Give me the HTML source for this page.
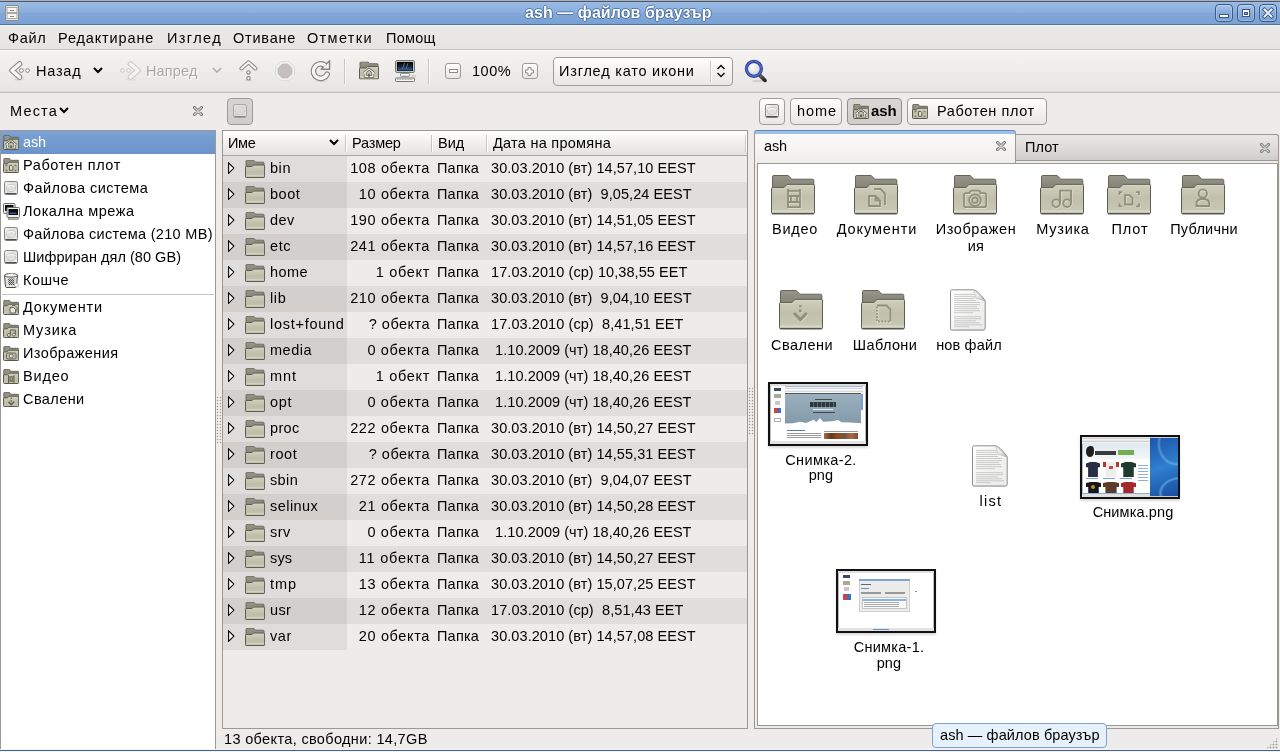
<!DOCTYPE html>
<html><head><meta charset="utf-8">
<style>
*{box-sizing:border-box;margin:0;padding:0}
html,body{width:1280px;height:752px;overflow:hidden;background:#edeceb;font-family:"Liberation Sans",sans-serif;color:#000;position:relative}
.a{position:absolute}
.t{position:absolute;font-size:14.5px;line-height:16px;white-space:pre;will-change:transform}
svg.i{position:absolute;overflow:visible}
#title{left:0;top:0;width:1280px;height:25px;background:linear-gradient(#b8aea6 0,#b8aea6 1px,#3f5a80 1px,#3f5a80 2px,#a2c0ea 2px,#98b9e3 3px,#8bb0df 12px,#82a8d9 13px,#7aa1d4 24px,#4a74aa 24px)}
#menubar{left:0;top:25px;width:1280px;height:25px;background:linear-gradient(#f6f2ee 0,#f6f2ee 1px,#ebeae8 1px,#e5e4e2 24px,#c3c1bd 24px)}
#toolbar{left:0;top:50px;width:1280px;height:43px;background:linear-gradient(#ffffff 0,#ffffff 1px,#f4f3f1 1px,#e7e6e4 40px,#ebebe9 41px,#c4c2be 42px)}
.wb{position:absolute;top:4px;width:18px;height:18px;border:1px solid #3d5b84;border-radius:4px;background:linear-gradient(#a9c5eb,#86abdb 50%,#7ba2d5);box-shadow:inset 0 0 0 1px rgba(255,255,255,0.25)}
.sep{position:absolute;width:1px;background:#c8c6c2;box-shadow:1px 0 0 #fafaf9}
.btn{position:absolute;border:1px solid #a19c97;border-radius:4px;background:linear-gradient(#fdfdfc,#f3f2f1 50%,#e8e7e5)}
.sb{position:absolute;top:135px;left:3px}
.row{position:absolute;left:223px;width:524px;height:26px}
.nm{position:absolute;left:0;top:0;width:124px;height:26px}
.lt{position:absolute;font-size:14.5px;line-height:16px;white-space:pre;top:5px}
.lbl{position:absolute;font-size:14.5px;line-height:16px;white-space:pre;text-align:center;will-change:transform}
</style></head><body>
<svg width="0" height="0" style="position:absolute">
<defs>
<linearGradient id="gF" x1="0" y1="0" x2="0" y2="1"><stop offset="0" stop-color="#d2d2c0"></stop><stop offset="0.55" stop-color="#bdbda9"></stop><stop offset="0.9" stop-color="#c3c3b0"></stop><stop offset="1" stop-color="#a9a994"></stop></linearGradient>
<linearGradient id="gFL" x1="0" y1="0" x2="0" y2="1"><stop offset="0" stop-color="#cfcfbd"></stop><stop offset="0.45" stop-color="#c0c0ac"></stop><stop offset="0.85" stop-color="#c6c6b3"></stop><stop offset="0.92" stop-color="#d9d9c8"></stop><stop offset="1" stop-color="#a9aa94"></stop></linearGradient>
<linearGradient id="gB" x1="0" y1="0" x2="0" y2="1"><stop offset="0" stop-color="#96978a"></stop><stop offset="1" stop-color="#818274"></stop></linearGradient>
<symbol id="fs" viewBox="0 0 16 16">
<path d="M0.8,13 V1.2 Q0.8,0.3 1.7,0.3 H6.3 L7.5,2.3 H14.8 Q15.7,2.3 15.7,3.2 V13 Z" fill="url(#gB)" stroke="#5f6052" stroke-width="0.9"></path>
<path d="M0.5,13.6 V6.6 Q0.5,5.8 1.3,5.8 H4.4 L6,4.2 H14.9 Q15.7,4.2 15.7,5 V13.6 Q15.7,14.5 14.8,14.5 H1.4 Q0.5,14.5 0.5,13.6 Z" fill="url(#gF)" stroke="#595a4c" stroke-width="1"></path>
</symbol>
<symbol id="fsHome" viewBox="0 0 16 16"><use href="#fs"></use>
<path d="M2.8,9.8 L8,5.6 L13.2,9.8 M4.3,8.8 V13 H11.7 V8.8" fill="none" stroke="#5a5b4d" stroke-width="2.3" stroke-linejoin="round"></path>
<path d="M2.8,9.8 L8,5.6 L13.2,9.8 M4.3,8.8 V13 H11.7 V8.8" fill="none" stroke="#f6f6f0" stroke-width="1" stroke-linejoin="round"></path>
<rect x="7.2" y="10.4" width="1.6" height="2.6" fill="#5a5b4d"></rect>
</symbol>
<symbol id="fsDesk" viewBox="0 0 16 16"><use href="#fs"></use>
<path d="M3,8.5 V7.3 H4.5 M11.5,7.3 H13 V8.5 M3,11.5 V12.7 H4.5 M11.5,12.7 H13 V11.5" fill="none" stroke="#6a6b5c" stroke-width="1"></path>
<path d="M6.5,7.5 H8.8 L9.8,8.5 V12.3 H6.5 Z" fill="#e4e4d8" stroke="#5e5f51" stroke-width="1"></path>
</symbol>
<symbol id="fl" viewBox="0 0 20 18">
<path d="M1,9 V1.2 Q1,0.4 1.8,0.4 H9 L10.5,2.2 H18.2 Q19,2.2 19,3 V9 Z" fill="url(#gB)" stroke="#66675a" stroke-width="0.9"></path>
<path d="M0.5,16.8 V7.2 Q0.5,6.5 1.2,6.5 H7 L8.5,5 H19 Q19.6,5 19.6,5.7 V16.8 Q19.6,17.5 18.9,17.5 H1.2 Q0.5,17.5 0.5,16.8 Z" fill="url(#gF)" stroke="#5b5c4e" stroke-width="1"></path>
<path d="M1.5,15.8 H18.6" stroke="#dcdccc" stroke-width="0.8"></path>
</symbol>
<symbol id="fL" viewBox="0 0 44 40">
<path d="M1.5,14 V1.8 Q1.5,0.5 2.8,0.5 H17.2 L20.8,4.2 H41.5 Q42.8,4.2 42.8,5.5 V14 Z" fill="url(#gB)" stroke="#636455" stroke-width="1"></path>
<path d="M0.5,37.5 V13.6 Q0.5,12.6 1.5,12.6 H13 L16,9.4 H42.5 Q43.5,9.4 43.5,10.4 V37.5 Q43.5,38.8 42.2,38.8 H1.8 Q0.5,38.8 0.5,37.5 Z" fill="url(#gFL)" stroke="#5c5d4e" stroke-width="1"></path>
<path d="M1.5,13.6 H13.3 L16.3,10.4 H42.5" fill="none" stroke="#d9d9c9" stroke-width="0.8"></path>
<path d="M1.2,38.6 H42.8" stroke="#55564a" stroke-width="1.3"></path>
</symbol>
<symbol id="emVid" viewBox="0 0 44 40"><g fill="none" stroke-width="1.8">
<g stroke="#dedecf" transform="translate(0.6,0.8)"><path d="M17,14 V33 M29,14 V33 M17,15.8 H29 M17,21 H29 M17,27 H29 M17,32.2 H29 M20,21 V27 M26,21 V27"></path></g>
<g stroke="#8e8f7c"><path d="M17,14 V33 M29,14 V33 M17,15.8 H29 M17,21 H29 M17,27 H29 M17,32.2 H29 M20,21 V27 M26,21 V27"></path></g></g></symbol>
<symbol id="emDoc" viewBox="0 0 44 40"><g fill="none" stroke-width="1.8">
<g stroke="#dedecf" transform="translate(0.6,0.8)"><path d="M15,21 H21.5 L26,25.5 V31 H15 Z M21.5,21 V25.5 H26 M20,14 H26.5 L31,18.5 V30"></path></g>
<g stroke="#8e8f7c"><path d="M15,21 H21.5 L26,25.5 V31 H15 Z M21.5,21 V25.5 H26 M20,14 H26.5 L31,18.5 V30"></path></g></g></symbol>
<symbol id="emCam" viewBox="0 0 44 40"><g fill="none" stroke-width="1.8">
<g stroke="#dedecf" transform="translate(0.6,0.8)"><path d="M13,18.2 H16.5 Q17,15.6 19,15.6 H25 Q27,15.6 27.5,18.2 H31.3 Q33.2,18.2 33.2,20.2 V30.3 Q33.2,32.2 31.3,32.2 H13 Q11,32.2 11,30.3 V20.2 Q11,18.2 13,18.2 Z"></path><circle cx="22" cy="25.3" r="5.8"></circle><circle cx="22" cy="25.3" r="2.8"></circle></g>
<g stroke="#8e8f7c"><path d="M13,18.2 H16.5 Q17,15.6 19,15.6 H25 Q27,15.6 27.5,18.2 H31.3 Q33.2,18.2 33.2,20.2 V30.3 Q33.2,32.2 31.3,32.2 H13 Q11,32.2 11,30.3 V20.2 Q11,18.2 13,18.2 Z"></path><circle cx="22" cy="25.3" r="5.8"></circle><circle cx="22" cy="25.3" r="2.8"></circle></g></g></symbol>
<symbol id="emMus" viewBox="0 0 44 40"><g fill="none" stroke-width="1.9">
<g stroke="#dedecf" transform="translate(0.6,0.8)"><path d="M20,28 V15.6 H31 V28"></path><circle cx="16.2" cy="28.2" r="3.8"></circle><circle cx="27.2" cy="28.2" r="3.8"></circle></g>
<g stroke="#8e8f7c"><path d="M20,28 V15.6 H31 V28"></path><circle cx="16.2" cy="28.2" r="3.8"></circle><circle cx="27.2" cy="28.2" r="3.8"></circle></g></g></symbol>
<symbol id="emDesk" viewBox="0 0 44 40"><g fill="none" stroke-width="1.8">
<g stroke="#dedecf" transform="translate(0.6,0.8)"><path d="M12.5,20 V17.2 H15.3 M29.2,17.2 H32 V20 M12.5,28.6 V31.4 H15.3 M29.2,31.4 H32 V28.6 M18,20.2 H22.5 L25.5,23.2 V29.5 H18 Z"></path></g>
<g stroke="#8e8f7c"><path d="M12.5,20 V17.2 H15.3 M29.2,17.2 H32 V20 M12.5,28.6 V31.4 H15.3 M29.2,31.4 H32 V28.6 M18,20.2 H22.5 L25.5,23.2 V29.5 H18 Z"></path></g></g></symbol>
<symbol id="emUsr" viewBox="0 0 44 40"><g fill="none" stroke-width="1.9">
<g stroke="#dedecf" transform="translate(0.6,0.8)"><circle cx="21.8" cy="18.6" r="4.2"></circle><path d="M15.5,31 V28.5 Q15.5,24 21.8,24 Q28.2,24 28.2,28.5 V31 Z"></path></g>
<g stroke="#8e8f7c"><circle cx="21.8" cy="18.6" r="4.2"></circle><path d="M15.5,31 V28.5 Q15.5,24 21.8,24 Q28.2,24 28.2,28.5 V31 Z"></path></g></g></symbol>
<symbol id="emDl" viewBox="0 0 44 40"><g fill="none">
<g stroke="#dedecf" transform="translate(0.6,0.8)"><path d="M21.4,15 V17.6 M21.4,19.3 V22.3" stroke-width="2.4"></path><path d="M15,23 L21.4,29.6 L27.8,23" stroke-width="3"></path></g>
<g stroke="#8e8f7c"><path d="M21.4,15 V17.6 M21.4,19.3 V22.3" stroke-width="2.4"></path><path d="M15,23 L21.4,29.6 L27.8,23" stroke-width="3"></path></g></g></symbol>
<symbol id="emTpl" viewBox="0 0 44 40"><g fill="none" stroke-width="1.8">
<g stroke="#dedecf" transform="translate(0.6,0.8)"><path d="M16,15.5 H25.5 L29.5,19.5 V31.5 M16,15.5 V31.5 H29.5" stroke-dasharray="none"></path></g>
<g stroke="#8e8f7c"><path d="M16,15.5 H25.5 L29.5,19.5 V31.5"></path><path d="M16,16.5 V31.5 H28.5" stroke-dasharray="1.8 1.4"></path></g></g></symbol>
<symbol id="drv" viewBox="0 0 16 16">
<linearGradient id="gDrv" x1="0" y1="0" x2="1" y2="1"><stop offset="0" stop-color="#f7f7f6"></stop><stop offset="0.5" stop-color="#dededc"></stop><stop offset="1" stop-color="#f2f2f0"></stop></linearGradient>
<rect x="1.5" y="1.5" width="13" height="13" rx="1.8" fill="url(#gDrv)" stroke="#858582" stroke-width="1"></rect>
<path d="M2.5,13.6 H13.5" stroke="#4e4e4c" stroke-width="1.2"></path>
<ellipse cx="8" cy="8" rx="4.5" ry="3.6" fill="none" stroke="#c9c9c6" stroke-width="1"></ellipse>
<path d="M4,6.5 Q8,4 12,6.5" fill="none" stroke="#fbfbfa" stroke-width="1"></path>
</symbol>
<symbol id="doc" viewBox="0 0 37 42">
<linearGradient id="gDoc" x1="0" y1="0" x2="1" y2="1"><stop offset="0" stop-color="#ffffff"></stop><stop offset="1" stop-color="#e9e9e8"></stop></linearGradient>
<linearGradient id="gCurl" x1="0" y1="0" x2="1" y2="1"><stop offset="0" stop-color="#ffffff"></stop><stop offset="0.6" stop-color="#e0e0df"></stop><stop offset="1" stop-color="#9a9a98"></stop></linearGradient>
<ellipse cx="18.5" cy="41.5" rx="17" ry="1.2" fill="#000" opacity="0.12"></ellipse>
<path d="M1.5,2.5 Q1.5,0.8 3.2,0.8 H24.5 Q28,0.8 36.2,11.5 V39.2 Q36.2,41 34.5,41 H3.2 Q1.5,41 1.5,39.2 Z" fill="url(#gDoc)" stroke="#8d8d8b" stroke-width="1"></path>
<path d="M5,5.4H26M5,7.4H26M5,9.5H26M5,11.5H27M5,13.5H31M5,15.6H31M5,17.6H28M5,19.6H30M5,21.7H31M5,23.7H24M5,27.7H32M5,29.7H32M5,31.8H27M5,33.8H31M5,35.8H33M5,37.7H20" stroke="#c4c4c3" stroke-width="0.9"></path>
<path d="M24.5,1.5 Q26.5,6 27,9.5 Q31,9.5 35.8,12.2 Q30,4 24.5,1.5 Z" fill="url(#gCurl)" stroke="#b0b0ae" stroke-width="0.5"></path>
</symbol>
<symbol id="xc" viewBox="0 0 10 10">
<path d="M1.5,1.5 L8.5,8.5 M8.5,1.5 L1.5,8.5" stroke="#6e6f6b" stroke-width="3" stroke-linecap="round"></path>
<path d="M1.6,1.6 L8.4,8.4 M8.4,1.6 L1.6,8.4" stroke="#c9cdc6" stroke-width="1.4" stroke-linecap="round"></path>
</symbol>
<symbol id="exp" viewBox="0 0 7 12">
<path d="M0.6,0.9 L5.9,6.1 L0.6,11.3 Z" fill="#fff" stroke="#000" stroke-width="1.1" stroke-linejoin="miter"></path>
</symbol>
</defs>
</svg>
<div id="title" class="a"></div>
<svg class="i" style="left:5px;top:5px" width="14" height="16" viewBox="0 0 14 16">
<rect x="0.5" y="0.5" width="13" height="15" rx="1.5" fill="#e9e8e4" stroke="#8f8d86"></rect>
<rect x="2" y="2.5" width="10" height="5" fill="#f6f6f4" stroke="#9c9a94" stroke-width="0.8"></rect>
<rect x="2" y="8.5" width="10" height="5" fill="#f6f6f4" stroke="#9c9a94" stroke-width="0.8"></rect>
<path d="M5,5.5H9M5,11.5H9" stroke="#8a8984"></path>
</svg>
<div class="t tb" style="left: 525px; top: 5px; font-weight: bold; font-size: 16px; color: rgb(255, 255, 255); letter-spacing: 0.06px; text-shadow: rgba(45, 80, 130, 0.55) 1px 0px 0px, rgba(45, 80, 130, 0.55) -1px 0px 0px, rgba(45, 80, 130, 0.55) 0px 1px 0px, rgba(45, 80, 130, 0.55) 0px -1px 0px;">ash — файлов браузър</div>
<div class="wb" style="left:1215px"></div>
<div class="a" style="left:1219px;top:14px;width:10px;height:4px;background:#fff;border:1px solid #3b5880"></div>
<div class="wb" style="left:1237px"></div>
<div class="a" style="left:1242px;top:9px;width:8px;height:8px;background:#3b5880"></div>
<div class="a" style="left:1243px;top:10px;width:6px;height:6px;background:#fff"></div>
<div class="a" style="left:1244px;top:12px;width:4px;height:3px;background:#3b5880"></div>
<div class="a" style="left:1245px;top:13px;width:2px;height:1px;background:#7fa3d3"></div>
<div class="wb" style="left:1259px"></div>
<svg class="i" style="left:1263px;top:8px" width="10" height="10" viewBox="0 0 10 10"><path d="M1.5,1.5L8.5,8.5M8.5,1.5L1.5,8.5" stroke="#3b5880" stroke-width="3.6" stroke-linecap="square"></path><path d="M1.5,1.5L8.5,8.5M8.5,1.5L1.5,8.5" stroke="#fff" stroke-width="1.8" stroke-linecap="square"></path><rect x="4" y="4" width="2" height="2" fill="#dfe6ef"></rect></svg>

<div id="menubar" class="a"></div>
<div class="t" style="left: 8px; top: 30px; letter-spacing: 0.65px;">Файл</div>
<div class="t" style="left: 58px; top: 30px; letter-spacing: 0.86px;">Редактиране</div>
<div class="t" style="left: 167px; top: 30px; letter-spacing: 1.38px;">Изглед</div>
<div class="t" style="left: 233px; top: 30px; letter-spacing: 0.78px;">Отиване</div>
<div class="t" style="left: 307px; top: 30px; letter-spacing: 1.34px;">Отметки</div>
<div class="t" style="left: 386px; top: 30px; letter-spacing: 0.24px;">Помощ</div>

<div id="toolbar" class="a"></div>
<!-- back -->
<svg class="i" style="left:9px;top:60px" width="22" height="22" viewBox="0 0 22 22">
<ellipse cx="10" cy="19.5" rx="5" ry="1.2" fill="#000" opacity="0.08"></ellipse>
<path d="M10.5,4 L3,10.5 L10.5,17" fill="none" stroke="#85847f" stroke-width="5.6" stroke-linecap="round" stroke-linejoin="round"></path>
<path d="M10.5,4 L3,10.5 L10.5,17" fill="none" stroke="#f7f7f6" stroke-width="3.6" stroke-linecap="round" stroke-linejoin="round"></path>
<circle cx="12.4" cy="10.5" r="1.9" fill="#fff" stroke="#85847f" stroke-width="1"></circle><circle cx="18.6" cy="10.5" r="1.9" fill="#fff" stroke="#85847f" stroke-width="1"></circle>
</svg>
<div class="t" style="left: 36px; top: 63px; letter-spacing: 0.76px;">Назад</div>
<svg class="i" style="left:93px;top:67px" width="10" height="7" viewBox="0 0 10 7"><path d="M1,1 L5,5 L9,1" fill="none" stroke="#000" stroke-width="2"></path></svg>
<!-- forward -->
<svg class="i" style="left:119px;top:60px" width="22" height="22" viewBox="0 0 22 22">
<ellipse cx="12" cy="19.5" rx="5" ry="1.2" fill="#000" opacity="0.05"></ellipse>
<path d="M11.5,4 L19,10.5 L11.5,17" fill="none" stroke="#c9c8c5" stroke-width="5.6" stroke-linecap="round" stroke-linejoin="round"></path>
<path d="M11.5,4 L19,10.5 L11.5,17" fill="none" stroke="#f3f3f2" stroke-width="3.6" stroke-linecap="round" stroke-linejoin="round"></path>
<circle cx="9.6" cy="10.5" r="1.9" fill="#f5f5f4" stroke="#c9c8c5" stroke-width="1"></circle><circle cx="3.4" cy="10.5" r="1.9" fill="#f5f5f4" stroke="#c9c8c5" stroke-width="1"></circle>
</svg>
<div class="t" style="left: 146px; top: 63px; color: rgb(169, 167, 164); text-shadow: rgb(255, 255, 255) 1px 1px 0px; letter-spacing: 0.14px;">Напред</div>
<svg class="i" style="left:212px;top:67px" width="10" height="7" viewBox="0 0 10 7"><path d="M1,1 L5,5 L9,1" fill="none" stroke="#b0aeaa" stroke-width="1.6"></path></svg>
<!-- up -->
<svg class="i" style="left:238px;top:60px" width="22" height="22" viewBox="0 0 22 22">
<ellipse cx="10.5" cy="20.3" rx="4" ry="1" fill="#000" opacity="0.08"></ellipse>
<path d="M3.5,8.5 L10.5,2.3 L17.4,8.5" fill="none" stroke="#858480" stroke-width="4" stroke-linecap="round" stroke-linejoin="round"></path>
<path d="M3.5,8.5 L10.5,2.3 L17.4,8.5" fill="none" stroke="#f8f8f7" stroke-width="2.1" stroke-linecap="round" stroke-linejoin="round"></path>
<circle cx="10.5" cy="12.4" r="1.7" fill="#fff" stroke="#858480" stroke-width="1.1"></circle><circle cx="10.5" cy="18.3" r="1.7" fill="#fff" stroke="#858480" stroke-width="1.1"></circle>
</svg>
<!-- stop -->
<svg class="i" style="left:275px;top:61px" width="20" height="20" viewBox="0 0 20 20">
<path d="M6,0.5 H14 L19.5,6 V14 L14,19.5 H6 L0.5,14 V6 Z" fill="#f2f1f0" stroke="#dddbd8" stroke-width="1"></path>
<path d="M7.2,3 H12.8 L17,7.2 V12.8 L12.8,17 H7.2 L3,12.8 V7.2 Z" fill="#c5bfbe" stroke="#bab4b2" stroke-width="0.6"></path>
</svg>
<!-- reload -->
<svg class="i" style="left:311px;top:61px" width="20" height="21" viewBox="0 0 20 21">
<ellipse cx="10" cy="20" rx="6" ry="1.2" fill="#000" opacity="0.08"></ellipse>
<path d="M13.2,3.8 A7.25,7.25 0 1 0 16.2,13.2" fill="none" stroke="#84837f" stroke-width="5.6" stroke-linecap="round"></path>
<path d="M10.2,8.3 L18.6,8.3 L18.6,-0.2 Z" fill="#84837f" stroke="#84837f" stroke-width="1.4" stroke-linejoin="round"></path>
<path d="M13.2,3.8 A7.25,7.25 0 1 0 16.2,13.2" fill="none" stroke="#f8f8f7" stroke-width="3.4" stroke-linecap="round"></path>
<path d="M11.8,7.5 L17.8,7.5 L17.8,1.6 Z" fill="#f8f8f7"></path>
</svg>
<div class="sep" style="left:344px;top:59px;height:25px"></div>
<!-- home folder -->
<svg class="i" style="left:359px;top:61px" width="20" height="19" viewBox="0 0 20 18"><use href="#fl"></use>
<path d="M4.8,11.8 L10,7.6 L15.2,11.8 M6.2,10.8 V15.2 H13.8 V10.8" fill="none" stroke="#5f6052" stroke-width="2.6" stroke-linejoin="round"></path>
<path d="M4.8,11.8 L10,7.6 L15.2,11.8 M6.2,10.8 V15.2 H13.8 V10.8" fill="none" stroke="#f4f4ee" stroke-width="1.2" stroke-linejoin="round"></path>
<rect x="9" y="12.6" width="2" height="2.6" fill="#5f6052"></rect>
</svg>
<!-- computer -->
<svg class="i" style="left:394px;top:60px" width="22" height="22" viewBox="0 0 22 22">
<defs><linearGradient id="gScr" x1="0" y1="0" x2="0" y2="1"><stop offset="0" stop-color="#050607"></stop><stop offset="0.5" stop-color="#17253a"></stop><stop offset="1" stop-color="#3664a6"></stop></linearGradient></defs>
<rect x="1.5" y="0.5" width="19" height="12" rx="1.5" fill="#f2f2f0" stroke="#777775"></rect>
<rect x="2.8" y="1.8" width="16.4" height="9.4" fill="#000"></rect>
<rect x="3.5" y="2.5" width="15" height="8" fill="url(#gScr)"></rect>
<path d="M10.5,3 L8.5,9 M14,3 L12,9" stroke="#8a9ab0" stroke-width="0.9" opacity="0.7"></path>
<rect x="6.5" y="13.3" width="9" height="3" rx="1" fill="#fbfbfa" stroke="#6f6f6d" stroke-width="0.9"></rect>
<ellipse cx="19.8" cy="16.2" rx="2" ry="1.1" fill="#e4e4e2" stroke="#b9b9b6" stroke-width="0.6"></ellipse>
<rect x="1.5" y="18" width="19" height="3.5" rx="1" fill="#f6f6f4" stroke="#747472" stroke-width="1"></rect>
<path d="M3,19.3 H19" stroke="#8d8d8a" stroke-width="0.9" stroke-dasharray="1 0.6"></path>
</svg>
<div class="sep" style="left:428px;top:59px;height:25px"></div>
<!-- zoom minus/plus -->
<div class="btn" style="left:445px;top:63px;width:16px;height:16px;border-color:#9d9994;border-radius:3px"></div>
<div class="a" style="left:449px;top:69px;width:9px;height:4px;border:1px solid #8f8c87;background:#fafaf9"></div>
<div class="t" style="left: 472px; top: 63px; letter-spacing: 0.5px;">100%</div>
<div class="btn" style="left:522px;top:63px;width:16px;height:16px;border-color:#9d9994;border-radius:3px"></div>
<svg class="i" style="left:525px;top:67px" width="9" height="9" viewBox="0 0 9 9"><path d="M3,0.5 H6 V3 H8.5 V6 H6 V8.5 H3 V6 H0.5 V3 H3 Z" fill="#fafaf9" stroke="#8f8c87" stroke-width="1"></path></svg>
<!-- combo -->
<div class="btn" style="left:553px;top:57px;width:180px;height:29px;border-color:#a09b96;border-radius:4px"></div>
<div class="t" style="left: 559px; top: 63px; letter-spacing: 0.78px;">Изглед като икони</div>
<div class="sep" style="left:710px;top:61px;height:21px;background:#cbc9c5"></div>
<svg class="i" style="left:716px;top:63px" width="10" height="16" viewBox="0 0 10 16"><path d="M1.5,6 L5,2.5 L8.5,6 M1.5,10 L5,13.5 L8.5,10" fill="none" stroke="#111" stroke-width="1.5"></path></svg>
<!-- search -->
<svg class="i" style="left:744px;top:60px" width="24" height="23" viewBox="0 0 24 23">
<defs><radialGradient id="gLens" cx="0.4" cy="0.35" r="0.7"><stop offset="0" stop-color="#ffffff"></stop><stop offset="0.5" stop-color="#e6e6e6"></stop><stop offset="1" stop-color="#c4c4c6"></stop></radialGradient>
<linearGradient id="gHdl" x1="0" y1="0" x2="1" y2="1"><stop offset="0" stop-color="#8a8678"></stop><stop offset="1" stop-color="#24221e"></stop></linearGradient></defs>
<ellipse cx="14" cy="21" rx="6" ry="1.3" fill="#000" opacity="0.1"></ellipse>
<path d="M15,14.4 L21,20.4" stroke="#2c2a25" stroke-width="3.6" stroke-linecap="round"></path>
<path d="M15.3,14.7 L20.6,20" stroke="url(#gHdl)" stroke-width="2" stroke-linecap="round"></path>
<circle cx="9.9" cy="8.8" r="7.5" fill="url(#gLens)" stroke="#2b3a94" stroke-width="3.2"></circle>
<circle cx="9.9" cy="8.8" r="7.5" fill="none" stroke="#5566cc" stroke-width="1.6"></circle>
</svg>
<!-- pane header -->
<div class="t" style="left: 10px; top: 103px; letter-spacing: 1.17px;">Места</div>
<svg class="i" style="left:59px;top:107px" width="10" height="7" viewBox="0 0 10 7"><path d="M1,1 L5,5 L9,1" fill="none" stroke="#000" stroke-width="2"></path></svg>
<svg class="i" style="left:193px;top:106px" width="10" height="10"><use href="#xc"></use></svg>
<div class="btn" style="left:227px;top:98px;width:26px;height:27px;background:linear-gradient(#d8d5d2,#cfccc9);border-color:#9e9a95"></div>
<svg class="i" style="left:232px;top:103px" width="16" height="16" opacity="0.55"><use href="#drv"></use></svg>

<!-- sidebar -->
<div class="a" style="left:0;top:130px;width:216px;height:621px;background:#fff;border:1px solid #9c9893"></div>
<div class="a" style="left:1px;top:131px;width:214px;height:23px;background:linear-gradient(#7ba2d6,#6b93c9)"></div>
<div class="a" style="left:2px;top:294px;width:212px;height:1px;background:#c7c5c2"></div>

<svg class="i" style="left:3px;top:135px" width="16" height="16"><use href="#fsHome"></use></svg>
<div class="t" style="left: 23px; top: 134px; color: rgb(255, 255, 255); letter-spacing: -0.14px;">ash</div>
<svg class="i" style="left:3px;top:158px" width="16" height="16"><use href="#fsDesk"></use></svg>
<div class="t" style="left: 23px; top: 157px; letter-spacing: 0.6px;">Работен плот</div>
<svg class="i" style="left:3px;top:180px" width="16" height="16"><use href="#drv"></use></svg>
<div class="t" style="left: 23px; top: 180px; letter-spacing: 0.44px;">Файлова система</div>
<svg class="i" style="left:3px;top:203px" width="17" height="17" viewBox="0 0 17 17">
<rect x="0.5" y="0.5" width="11.5" height="10" rx="1" fill="#ecece9" stroke="#6c6c6a"></rect><rect x="2" y="2" width="8.5" height="6" fill="#0a0d14"></rect>
<rect x="4" y="4.5" width="12.5" height="10" rx="1" fill="#efefec" stroke="#6c6c6a"></rect><rect x="5.5" y="6" width="9.5" height="6" fill="#06080d"></rect>
<rect x="6.5" y="9.5" width="7" height="1.5" fill="#3a5a94"></rect>
<rect x="5.5" y="15" width="10" height="1.6" fill="#d8d8d5" stroke="#6c6c6a" stroke-width="0.6"></rect>
</svg>
<div class="t" style="left: 23px; top: 203px; letter-spacing: 0.54px;">Локална мрежа</div>
<svg class="i" style="left:3px;top:226px" width="16" height="16"><use href="#drv"></use></svg>
<div class="t" style="left: 23px; top: 226px; letter-spacing: 0.31px;">Файлова система (210 MB)</div>
<svg class="i" style="left:3px;top:249px" width="16" height="16"><use href="#drv"></use></svg>
<div class="t" style="left: 23px; top: 249px; letter-spacing: 0.04px;">Шифриран дял (80 GB)</div>
<svg class="i" style="left:3px;top:272px" width="17" height="17" viewBox="0 0 17 17">
<defs><pattern id="pMesh" width="2" height="2" patternUnits="userSpaceOnUse"><rect width="2" height="2" fill="#d4d4d2"></rect><rect width="1" height="1" fill="#3d3d3b"></rect><rect x="1" y="1" width="1" height="1" fill="#5a5a58"></rect></pattern></defs>
<path d="M1.5,3.5 H14.5 L13.5,14.5 Q13.3,15.5 12.3,15.5 H3.7 Q2.7,15.5 2.5,14.5 Z" fill="#e2e2e0" stroke="#4b4b49" stroke-width="1"></path>
<path d="M5,6.5 H11.5 L11,13 H5.5 Z" fill="url(#pMesh)"></path>
<ellipse cx="8" cy="3.3" rx="6.6" ry="1.8" fill="#f4f4f2" stroke="#4b4b49" stroke-width="0.9"></ellipse>
<path d="M4,3 Q5,1 7,2 Q9,0.5 10.5,2.2 Q12,1.5 13,3" fill="#fff" stroke="#8a8a88" stroke-width="0.6"></path>
<path d="M11.5,12.5 Q13,10.5 15,12 Q16.5,13 15,14.5 Q13,15.5 11.5,14 Z" fill="#fafafa" stroke="#9a9a98" stroke-width="0.6"></path>
</svg>
<div class="t" style="left: 23px; top: 272px; letter-spacing: 0.46px;">Кошче</div>

<svg class="i" style="left:3px;top:300px" width="16" height="16"><use href="#fs"></use><path d="M7,7.5 H10.5 L12.5,9.5 V13 H7 Z" fill="#e8e8dc" stroke="#5a5b4d" stroke-width="0.9"></path><path d="M9,5.5 H12 L14,7.5 V11.5" fill="none" stroke="#5a5b4d" stroke-width="0.9"></path></svg>
<div class="t" style="left: 23px; top: 299px; letter-spacing: 0.83px;">Документи</div>
<svg class="i" style="left:3px;top:323px" width="16" height="16"><use href="#fs"></use><path d="M7.3,12 V7 H12.3 V11.5" fill="none" stroke="#5a5b4d" stroke-width="1"></path><circle cx="5.9" cy="12" r="1.5" fill="#e8e8dc" stroke="#5a5b4d" stroke-width="0.9"></circle><circle cx="10.9" cy="11.6" r="1.5" fill="#e8e8dc" stroke="#5a5b4d" stroke-width="0.9"></circle></svg>
<div class="t" style="left: 23px; top: 322px; letter-spacing: 0.85px;">Музика</div>
<svg class="i" style="left:3px;top:346px" width="16" height="16"><use href="#fs"></use><rect x="3.5" y="7" width="9.5" height="6" rx="1.3" fill="none" stroke="#5a5b4d" stroke-width="0.9"></rect><circle cx="8.2" cy="10" r="2" fill="#e8e8dc" stroke="#5a5b4d" stroke-width="0.9"></circle></svg>
<div class="t" style="left: 23px; top: 345px; letter-spacing: 0.39px;">Изображения</div>
<svg class="i" style="left:3px;top:369px" width="16" height="16"><use href="#fs"></use><path d="M5.5,6 V14 M11,6 V14 M5.5,7.8 H11 M5.5,12.2 H11" fill="none" stroke="#5a5b4d" stroke-width="0.9"></path><rect x="6.8" y="9" width="3" height="2.2" fill="none" stroke="#5a5b4d" stroke-width="0.8"></rect></svg>
<div class="t" style="left: 23px; top: 368px; letter-spacing: 0.81px;">Видео</div>
<svg class="i" style="left:3px;top:392px" width="16" height="16"><use href="#fs"></use><path d="M8.2,5.5 V7 M8.2,8 V9.5" stroke="#5a5b4d" stroke-width="1.1"></path><path d="M5.5,9.8 L8.2,12.6 L11,9.8" fill="none" stroke="#5a5b4d" stroke-width="1.5"></path></svg>
<div class="t" style="left: 23px; top: 391px; letter-spacing: 0.41px;">Свалени</div>

<!-- paned handle dots -->
<div class="a" style="left:216px;top:396px;width:6px;height:48px;background:radial-gradient(circle at 1.5px 1.5px,#9d9a95 0.75px,rgba(255,255,255,0.8) 1.1px,transparent 1.5px) 0 0/3px 3px"></div>
<div class="a" style="left:748px;top:387px;width:6px;height:48px;background:radial-gradient(circle at 1.5px 1.5px,#9d9a95 0.75px,rgba(255,255,255,0.8) 1.1px,transparent 1.5px) 0 0/3px 3px"></div>
<!-- list view -->
<div class="a" style="left:222px;top:130px;width:526px;height:599px;background:#edeceb;border:1px solid #9c9893"></div>
<div class="a" style="left:223px;top:131px;width:524px;height:25px;background:linear-gradient(#ffffff,#f3f2f1 40%,#e4e3e1);border-bottom:1px solid #aba8a4"></div>
<div class="a" style="left:345px;top:135px;width:1px;height:17px;background:#c9c6c2;box-shadow:1px 0 0 #fff"></div>
<div class="a" style="left:431px;top:135px;width:1px;height:17px;background:#c9c6c2;box-shadow:1px 0 0 #fff"></div>
<div class="a" style="left:486px;top:135px;width:1px;height:17px;background:#c9c6c2;box-shadow:1px 0 0 #fff"></div>
<div class="a" style="left:745px;top:135px;width:1px;height:17px;background:#c9c6c2;box-shadow:1px 0 0 #fff"></div>
<div class="t" style="left: 228px; top: 135px; letter-spacing: -0.31px;">Име</div>
<svg class="i" style="left:329px;top:139px" width="10" height="7" viewBox="0 0 10 7"><path d="M1,1 L5,5 L9,1" fill="none" stroke="#000" stroke-width="2"></path></svg>
<div class="t" style="left: 352px; top: 135px; letter-spacing: -0.18px;">Размер</div>
<div class="t" style="left: 438px; top: 135px; letter-spacing: 0.04px;">Вид</div>
<div class="t" style="left: 493px; top: 135px; letter-spacing: 0.26px;">Дата на промяна</div>
<div class="a" style="left:223px;top:156px;width:524px;height:26px;background:#edeceb"></div>
<div class="a" style="left:223px;top:156px;width:124px;height:26px;background:#dfdddb"></div>
<svg class="i" style="left:228px;top:162px" width="7" height="12"><use href="#exp"></use></svg>
<svg class="i" style="left:245px;top:160px" width="20" height="18"><use href="#fl"></use></svg>
<div class="t" style="left: 270px; top: 160px; letter-spacing: 0.55px;">bin</div>
<div class="t" style="left: 300px; width: 130px; text-align: right; top: 160px; letter-spacing: 0.63px;">108 обекта</div>
<div class="t" style="left: 437px; top: 160px; letter-spacing: 0.2px;">Папка</div>
<div class="t" style="left: 491px; top: 160px; letter-spacing: 0.07px;">30.03.2010 (вт) 14,57,10 EEST</div>
<div class="a" style="left:223px;top:182px;width:524px;height:26px;background:#dfdedc"></div>
<div class="a" style="left:223px;top:182px;width:124px;height:26px;background:#d3cfcc"></div>
<svg class="i" style="left:228px;top:188px" width="7" height="12"><use href="#exp"></use></svg>
<svg class="i" style="left:245px;top:186px" width="20" height="18"><use href="#fl"></use></svg>
<div class="t" style="left: 270px; top: 186px; letter-spacing: 0.56px;">boot</div>
<div class="t" style="left: 300px; width: 130px; text-align: right; top: 186px; letter-spacing: 0.63px;">10 обекта</div>
<div class="t" style="left: 437px; top: 186px; letter-spacing: 0.2px;">Папка</div>
<div class="t" style="left: 491px; top: 186px; letter-spacing: 0.07px;">30.03.2010 (вт)  9,05,24 EEST</div>
<div class="a" style="left:223px;top:208px;width:524px;height:26px;background:#edeceb"></div>
<div class="a" style="left:223px;top:208px;width:124px;height:26px;background:#dfdddb"></div>
<svg class="i" style="left:228px;top:214px" width="7" height="12"><use href="#exp"></use></svg>
<svg class="i" style="left:245px;top:212px" width="20" height="18"><use href="#fl"></use></svg>
<div class="t" style="left: 270px; top: 212px; letter-spacing: 0.49px;">dev</div>
<div class="t" style="left: 300px; width: 130px; text-align: right; top: 212px; letter-spacing: 0.63px;">190 обекта</div>
<div class="t" style="left: 437px; top: 212px; letter-spacing: 0.2px;">Папка</div>
<div class="t" style="left: 491px; top: 212px; letter-spacing: 0.07px;">30.03.2010 (вт) 14,51,05 EEST</div>
<div class="a" style="left:223px;top:234px;width:524px;height:26px;background:#dfdedc"></div>
<div class="a" style="left:223px;top:234px;width:124px;height:26px;background:#d3cfcc"></div>
<svg class="i" style="left:228px;top:240px" width="7" height="12"><use href="#exp"></use></svg>
<svg class="i" style="left:245px;top:238px" width="20" height="18"><use href="#fl"></use></svg>
<div class="t" style="left: 270px; top: 238px; letter-spacing: 0.6px;">etc</div>
<div class="t" style="left: 300px; width: 130px; text-align: right; top: 238px; letter-spacing: 0.63px;">241 обекта</div>
<div class="t" style="left: 437px; top: 238px; letter-spacing: 0.2px;">Папка</div>
<div class="t" style="left: 491px; top: 238px; letter-spacing: 0.07px;">30.03.2010 (вт) 14,57,16 EEST</div>
<div class="a" style="left:223px;top:260px;width:524px;height:26px;background:#edeceb"></div>
<div class="a" style="left:223px;top:260px;width:124px;height:26px;background:#dfdddb"></div>
<svg class="i" style="left:228px;top:266px" width="7" height="12"><use href="#exp"></use></svg>
<svg class="i" style="left:245px;top:264px" width="20" height="18"><use href="#fl"></use></svg>
<div class="t" style="left: 270px; top: 264px; letter-spacing: 0.44px;">home</div>
<div class="t" style="left: 300px; width: 130px; text-align: right; top: 264px; letter-spacing: 0.68px;">1 обект</div>
<div class="t" style="left: 437px; top: 264px; letter-spacing: 0.2px;">Папка</div>
<div class="t" style="left: 491px; top: 264px; letter-spacing: 0.08px;">17.03.2010 (ср) 10,38,55 EET</div>
<div class="a" style="left:223px;top:286px;width:524px;height:26px;background:#dfdedc"></div>
<div class="a" style="left:223px;top:286px;width:124px;height:26px;background:#d3cfcc"></div>
<svg class="i" style="left:228px;top:292px" width="7" height="12"><use href="#exp"></use></svg>
<svg class="i" style="left:245px;top:290px" width="20" height="18"><use href="#fl"></use></svg>
<div class="t" style="left: 270px; top: 290px; letter-spacing: 0.62px;">lib</div>
<div class="t" style="left: 300px; width: 130px; text-align: right; top: 290px; letter-spacing: 0.63px;">210 обекта</div>
<div class="t" style="left: 437px; top: 290px; letter-spacing: 0.2px;">Папка</div>
<div class="t" style="left: 491px; top: 290px; letter-spacing: 0.07px;">30.03.2010 (вт)  9,04,10 EEST</div>
<div class="a" style="left:223px;top:312px;width:524px;height:26px;background:#edeceb"></div>
<div class="a" style="left:223px;top:312px;width:124px;height:26px;background:#dfdddb"></div>
<svg class="i" style="left:228px;top:318px" width="7" height="12"><use href="#exp"></use></svg>
<svg class="i" style="left:245px;top:316px" width="20" height="18"><use href="#fl"></use></svg>
<div class="t" style="left: 270px; top: 316px; letter-spacing: 0.73px;">lost+found</div>
<div class="t" style="left: 300px; width: 130px; text-align: right; top: 316px; letter-spacing: 0.47px;">? обекта</div>
<div class="t" style="left: 437px; top: 316px; letter-spacing: 0.2px;">Папка</div>
<div class="t" style="left: 491px; top: 316px; letter-spacing: 0.08px;">17.03.2010 (ср)  8,41,51 EET</div>
<div class="a" style="left:223px;top:338px;width:524px;height:26px;background:#dfdedc"></div>
<div class="a" style="left:223px;top:338px;width:124px;height:26px;background:#d3cfcc"></div>
<svg class="i" style="left:228px;top:344px" width="7" height="12"><use href="#exp"></use></svg>
<svg class="i" style="left:245px;top:342px" width="20" height="18"><use href="#fl"></use></svg>
<div class="t" style="left: 270px; top: 342px; letter-spacing: 0.5px;">media</div>
<div class="t" style="left: 300px; width: 130px; text-align: right; top: 342px; letter-spacing: 0.64px;">0 обекта</div>
<div class="t" style="left: 437px; top: 342px; letter-spacing: 0.2px;">Папка</div>
<div class="t" style="left: 491px; top: 342px; letter-spacing: 0.06px;"> 1.10.2009 (чт) 18,40,26 EEST</div>
<div class="a" style="left:223px;top:364px;width:524px;height:26px;background:#edeceb"></div>
<div class="a" style="left:223px;top:364px;width:124px;height:26px;background:#dfdddb"></div>
<svg class="i" style="left:228px;top:370px" width="7" height="12"><use href="#exp"></use></svg>
<svg class="i" style="left:245px;top:368px" width="20" height="18"><use href="#fl"></use></svg>
<div class="t" style="left: 270px; top: 368px; letter-spacing: 0.91px;">mnt</div>
<div class="t" style="left: 300px; width: 130px; text-align: right; top: 368px; letter-spacing: 0.68px;">1 обект</div>
<div class="t" style="left: 437px; top: 368px; letter-spacing: 0.2px;">Папка</div>
<div class="t" style="left: 491px; top: 368px; letter-spacing: 0.06px;"> 1.10.2009 (чт) 18,40,26 EEST</div>
<div class="a" style="left:223px;top:390px;width:524px;height:26px;background:#dfdedc"></div>
<div class="a" style="left:223px;top:390px;width:124px;height:26px;background:#d3cfcc"></div>
<svg class="i" style="left:228px;top:396px" width="7" height="12"><use href="#exp"></use></svg>
<svg class="i" style="left:245px;top:394px" width="20" height="18"><use href="#fl"></use></svg>
<div class="t" style="left: 270px; top: 394px; letter-spacing: 0.68px;">opt</div>
<div class="t" style="left: 300px; width: 130px; text-align: right; top: 394px; letter-spacing: 0.64px;">0 обекта</div>
<div class="t" style="left: 437px; top: 394px; letter-spacing: 0.2px;">Папка</div>
<div class="t" style="left: 491px; top: 394px; letter-spacing: 0.06px;"> 1.10.2009 (чт) 18,40,26 EEST</div>
<div class="a" style="left:223px;top:416px;width:524px;height:26px;background:#edeceb"></div>
<div class="a" style="left:223px;top:416px;width:124px;height:26px;background:#dfdddb"></div>
<svg class="i" style="left:228px;top:422px" width="7" height="12"><use href="#exp"></use></svg>
<svg class="i" style="left:245px;top:420px" width="20" height="18"><use href="#fl"></use></svg>
<div class="t" style="left: 270px; top: 420px; letter-spacing: 0.35px;">proc</div>
<div class="t" style="left: 300px; width: 130px; text-align: right; top: 420px; letter-spacing: 0.63px;">222 обекта</div>
<div class="t" style="left: 437px; top: 420px; letter-spacing: 0.2px;">Папка</div>
<div class="t" style="left: 491px; top: 420px; letter-spacing: 0.07px;">30.03.2010 (вт) 14,50,27 EEST</div>
<div class="a" style="left:223px;top:442px;width:524px;height:26px;background:#dfdedc"></div>
<div class="a" style="left:223px;top:442px;width:124px;height:26px;background:#d3cfcc"></div>
<svg class="i" style="left:228px;top:448px" width="7" height="12"><use href="#exp"></use></svg>
<svg class="i" style="left:245px;top:446px" width="20" height="18"><use href="#fl"></use></svg>
<div class="t" style="left: 270px; top: 446px; letter-spacing: 0.57px;">root</div>
<div class="t" style="left: 300px; width: 130px; text-align: right; top: 446px; letter-spacing: 0.47px;">? обекта</div>
<div class="t" style="left: 437px; top: 446px; letter-spacing: 0.2px;">Папка</div>
<div class="t" style="left: 491px; top: 446px; letter-spacing: 0.07px;">30.03.2010 (вт) 14,55,31 EEST</div>
<div class="a" style="left:223px;top:468px;width:524px;height:26px;background:#edeceb"></div>
<div class="a" style="left:223px;top:468px;width:124px;height:26px;background:#dfdddb"></div>
<svg class="i" style="left:228px;top:474px" width="7" height="12"><use href="#exp"></use></svg>
<svg class="i" style="left:245px;top:472px" width="20" height="18"><use href="#fl"></use></svg>
<div class="t" style="left: 270px; top: 472px; letter-spacing: 0.37px;">sbin</div>
<div class="t" style="left: 300px; width: 130px; text-align: right; top: 472px; letter-spacing: 0.63px;">272 обекта</div>
<div class="t" style="left: 437px; top: 472px; letter-spacing: 0.2px;">Папка</div>
<div class="t" style="left: 491px; top: 472px; letter-spacing: 0.07px;">30.03.2010 (вт)  9,04,07 EEST</div>
<div class="a" style="left:223px;top:494px;width:524px;height:26px;background:#dfdedc"></div>
<div class="a" style="left:223px;top:494px;width:124px;height:26px;background:#d3cfcc"></div>
<svg class="i" style="left:228px;top:500px" width="7" height="12"><use href="#exp"></use></svg>
<svg class="i" style="left:245px;top:498px" width="20" height="18"><use href="#fl"></use></svg>
<div class="t" style="left: 270px; top: 498px; letter-spacing: 0.45px;">selinux</div>
<div class="t" style="left: 300px; width: 130px; text-align: right; top: 498px; letter-spacing: 0.63px;">21 обекта</div>
<div class="t" style="left: 437px; top: 498px; letter-spacing: 0.2px;">Папка</div>
<div class="t" style="left: 491px; top: 498px; letter-spacing: 0.07px;">30.03.2010 (вт) 14,50,28 EEST</div>
<div class="a" style="left:223px;top:520px;width:524px;height:26px;background:#edeceb"></div>
<div class="a" style="left:223px;top:520px;width:124px;height:26px;background:#dfdddb"></div>
<svg class="i" style="left:228px;top:526px" width="7" height="12"><use href="#exp"></use></svg>
<svg class="i" style="left:245px;top:524px" width="20" height="18"><use href="#fl"></use></svg>
<div class="t" style="left: 270px; top: 524px; letter-spacing: 0.46px;">srv</div>
<div class="t" style="left: 300px; width: 130px; text-align: right; top: 524px; letter-spacing: 0.64px;">0 обекта</div>
<div class="t" style="left: 437px; top: 524px; letter-spacing: 0.2px;">Папка</div>
<div class="t" style="left: 491px; top: 524px; letter-spacing: 0.06px;"> 1.10.2009 (чт) 18,40,26 EEST</div>
<div class="a" style="left:223px;top:546px;width:524px;height:26px;background:#dfdedc"></div>
<div class="a" style="left:223px;top:546px;width:124px;height:26px;background:#d3cfcc"></div>
<svg class="i" style="left:228px;top:552px" width="7" height="12"><use href="#exp"></use></svg>
<svg class="i" style="left:245px;top:550px" width="20" height="18"><use href="#fl"></use></svg>
<div class="t" style="left: 270px; top: 550px; letter-spacing: 0.13px;">sys</div>
<div class="t" style="left: 300px; width: 130px; text-align: right; top: 550px; letter-spacing: 0.75px;">11 обекта</div>
<div class="t" style="left: 437px; top: 550px; letter-spacing: 0.2px;">Папка</div>
<div class="t" style="left: 491px; top: 550px; letter-spacing: 0.07px;">30.03.2010 (вт) 14,50,27 EEST</div>
<div class="a" style="left:223px;top:572px;width:524px;height:26px;background:#edeceb"></div>
<div class="a" style="left:223px;top:572px;width:124px;height:26px;background:#dfdddb"></div>
<svg class="i" style="left:228px;top:578px" width="7" height="12"><use href="#exp"></use></svg>
<svg class="i" style="left:245px;top:576px" width="20" height="18"><use href="#fl"></use></svg>
<div class="t" style="left: 270px; top: 576px; letter-spacing: 0.91px;">tmp</div>
<div class="t" style="left: 300px; width: 130px; text-align: right; top: 576px; letter-spacing: 0.63px;">13 обекта</div>
<div class="t" style="left: 437px; top: 576px; letter-spacing: 0.2px;">Папка</div>
<div class="t" style="left: 491px; top: 576px; letter-spacing: 0.07px;">30.03.2010 (вт) 15,07,25 EEST</div>
<div class="a" style="left:223px;top:598px;width:524px;height:26px;background:#dfdedc"></div>
<div class="a" style="left:223px;top:598px;width:124px;height:26px;background:#d3cfcc"></div>
<svg class="i" style="left:228px;top:604px" width="7" height="12"><use href="#exp"></use></svg>
<svg class="i" style="left:245px;top:602px" width="20" height="18"><use href="#fl"></use></svg>
<div class="t" style="left: 270px; top: 602px; letter-spacing: 0.37px;">usr</div>
<div class="t" style="left: 300px; width: 130px; text-align: right; top: 602px; letter-spacing: 0.63px;">12 обекта</div>
<div class="t" style="left: 437px; top: 602px; letter-spacing: 0.2px;">Папка</div>
<div class="t" style="left: 491px; top: 602px; letter-spacing: 0.08px;">17.03.2010 (ср)  8,51,43 EET</div>
<div class="a" style="left:223px;top:624px;width:524px;height:26px;background:#edeceb"></div>
<div class="a" style="left:223px;top:624px;width:124px;height:26px;background:#dfdddb"></div>
<svg class="i" style="left:228px;top:630px" width="7" height="12"><use href="#exp"></use></svg>
<svg class="i" style="left:245px;top:628px" width="20" height="18"><use href="#fl"></use></svg>
<div class="t" style="left: 270px; top: 628px; letter-spacing: 0.59px;">var</div>
<div class="t" style="left: 300px; width: 130px; text-align: right; top: 628px; letter-spacing: 0.63px;">20 обекта</div>
<div class="t" style="left: 437px; top: 628px; letter-spacing: 0.2px;">Папка</div>
<div class="t" style="left: 491px; top: 628px; letter-spacing: 0.07px;">30.03.2010 (вт) 14,57,08 EEST</div>
<div class="t" style="left: 224px; top: 731px; letter-spacing: 0.35px;">13 обекта, свободни: 14,7GB</div>
<!-- path bar -->
<div class="btn" style="left:759px;top:98px;width:26px;height:27px"></div>
<svg class="i" style="left:764px;top:103px" width="16" height="16"><use href="#drv"></use></svg>
<div class="btn" style="left:790px;top:98px;width:52px;height:27px"></div>
<div class="t" style="left: 797px; top: 103px; letter-spacing: 0.94px;">home</div>
<div class="btn" style="left:847px;top:98px;width:55px;height:27px;background:linear-gradient(#d9d6d3,#d0cdca);border-color:#938e89"></div>
<svg class="i" style="left:853px;top:104px" width="16" height="16"><use href="#fsHome"></use></svg>
<div class="t" style="left: 871px; top: 103px; font-weight: bold; font-size: 15px; letter-spacing: -0.03px;">ash</div>
<div class="btn" style="left:907px;top:98px;width:140px;height:27px"></div>
<svg class="i" style="left:912px;top:104px" width="16" height="16"><use href="#fsDesk"></use></svg>
<div class="t" style="left: 937px; top: 103px; letter-spacing: 0.58px;">Работен плот</div>

<!-- notebook -->
<div class="a" style="left:754px;top:160px;width:525px;height:569px;border:1px solid #9c9893;background:#edeceb"></div>
<!-- inactive tab -->
<div class="a" style="left:1015px;top:134px;width:264px;height:26px;border:1px solid #9c9893;border-bottom:none;border-radius:0 3px 0 0;background:linear-gradient(#eae8e6,#dcd9d6 60%,#cfccc9)"></div>
<div class="t" style="left: 1025px; top: 139px; letter-spacing: 0.05px;">Плот</div>
<svg class="i" style="left:1260px;top:143px" width="10" height="10"><use href="#xc"></use></svg>
<!-- active tab -->
<div class="a" style="left:754px;top:130px;width:262px;height:33px;border:1px solid #9c9893;border-top-color:#5f87bc;border-bottom:none;border-radius:3px 3px 0 0;background:linear-gradient(#a3c1e8 0,#9ebde6 3px,#fbfbfa 3px,#f6f5f4 50%,#efeeec)"></div>
<div class="t" style="left: 764px; top: 138px; letter-spacing: -0.14px;">ash</div>
<svg class="i" style="left:996px;top:141px" width="10" height="10"><use href="#xc"></use></svg>
<!-- icon view -->
<div class="a" style="left:757px;top:163px;width:521px;height:563px;background:#fff;border:1px solid #9c9893"></div>
<!-- row 1 large folders -->
<svg class="i" style="left:771px;top:175px" width="44" height="40"><use href="#fL"></use><use href="#emVid"></use></svg>
<div class="lbl" style="left: 745px; width: 100px; top: 221px; letter-spacing: 0.73px;">Видео</div>
<svg class="i" style="left:854px;top:175px" width="44" height="40"><use href="#fL"></use><use href="#emDoc"></use></svg>
<div class="lbl" style="left: 827px; width: 100px; top: 221px; letter-spacing: 0.9px;">Документи</div>
<svg class="i" style="left:953px;top:175px" width="44" height="40"><use href="#fL"></use><use href="#emCam"></use></svg>
<div class="lbl" style="left: 926px; width: 100px; top: 221px; letter-spacing: 0.61px;">Изображен</div>
<div class="lbl" style="left: 926px; width: 100px; top: 238px; letter-spacing: 0.16px;">ия</div>
<svg class="i" style="left:1040px;top:175px" width="44" height="40"><use href="#fL"></use><use href="#emMus"></use></svg>
<div class="lbl" style="left: 1013px; width: 100px; top: 221px; letter-spacing: 0.73px;">Музика</div>
<svg class="i" style="left:1107px;top:175px" width="44" height="40"><use href="#fL"></use><use href="#emDesk"></use></svg>
<div class="lbl" style="left: 1080px; width: 100px; top: 221px; letter-spacing: 0.89px;">Плот</div>
<svg class="i" style="left:1181px;top:175px" width="44" height="40"><use href="#fL"></use><use href="#emUsr"></use></svg>
<div class="lbl" style="left: 1154px; width: 100px; top: 221px; letter-spacing: 0.23px;">Публични</div>
<!-- row 2 -->
<svg class="i" style="left:779px;top:290px" width="44" height="40"><use href="#fL"></use><use href="#emDl"></use></svg>
<div class="lbl" style="left: 752px; width: 100px; top: 337px; letter-spacing: 0.48px;">Свалени</div>
<svg class="i" style="left:861px;top:290px" width="44" height="40"><use href="#fL"></use><use href="#emTpl"></use></svg>
<div class="lbl" style="left: 835px; width: 100px; top: 337px; letter-spacing: 0.35px;">Шаблони</div>
<svg class="i" style="left:949px;top:289px" width="37" height="42"><use href="#doc"></use></svg>
<div class="lbl" style="left: 919px; width: 100px; top: 337px; letter-spacing: 0.16px;">нов файл</div>
<!-- list doc -->
<svg class="i" style="left:971px;top:445px" width="37" height="42"><use href="#doc"></use></svg>
<div class="lbl" style="left: 941px; width: 100px; top: 493px; letter-spacing: 1.29px;">list</div>

<!-- thumbnail 2 -->
<div class="a" style="left:768px;top:382px;width:100px;height:64px;background:#fff;border:2px solid #111;box-shadow:0 2px 2px rgba(0,0,0,0.15),inset 0 0 0 0.5px #777;overflow:hidden">
 <div class="a" style="left:0;top:0;width:96px;height:2px;background:#dcdcdc"></div>
 <div class="a" style="left:4px;top:4px;width:7px;height:3px;background:#3a4a66"></div>
 <div class="a" style="left:4px;top:10px;width:7px;height:4px;background:#a9ab93"></div>
 <div class="a" style="left:5px;top:17px;width:5px;height:4px;background:#c8c8c8"></div>
 <div class="a" style="left:4px;top:24px;width:7px;height:5px;background:linear-gradient(90deg,#c44 50%,#3a70c0 50%)"></div>
 <div class="a" style="left:4px;top:34px;width:7px;height:4px;border:1px solid #aaa"></div>
 <div class="a" style="left:15px;top:2px;width:78px;height:1px;background:#9fbbe3"></div>
 <div class="a" style="left:15px;top:3px;width:78px;height:6px;background:repeating-linear-gradient(#f2f2f2 0 1px,#d6d6d6 1px 2px,#fafafa 2px 3px)"></div>
 <div class="a" style="left:15px;top:9px;width:76px;height:32px;background:linear-gradient(#4a5963 0,#4a5963 1px,#9ab0bd 1px,#8fa5b3 50%,#8299a7)"></div>
 <div class="a" style="left:15px;top:34px;width:76px;height:7px;background:#fff;clip-path:polygon(0 80%,10% 75%,20% 55%,28% 70%,38% 20%,41% 60%,46% 0,50% 55%,62% 45%,70% 30%,74% 60%,86% 65%,100% 75%,100% 100%,0 100%)"></div>
 <div class="a" style="left:45px;top:15px;width:17px;height:1px;background:#3d4a52"></div>
 <div class="a" style="left:40px;top:18px;width:26px;height:5px;background:repeating-linear-gradient(90deg,#2f373d 0 3px,#5a6a74 3px 4px)"></div>
 <div class="a" style="left:43px;top:25px;width:20px;height:1px;background:#e4eaee"></div>
 <div class="a" style="left:43px;top:28px;width:22px;height:1px;background:#3b4750"></div>
 <div class="a" style="left:91px;top:10px;width:2px;height:16px;background:#7aa0d0"></div>
 <div class="a" style="left:17px;top:46px;width:18px;height:1px;background:#5a7ab0"></div>
 <div class="a" style="left:17px;top:49px;width:34px;height:6px;background:repeating-linear-gradient(#9a9a9a 0 1px,#fff 1px 2px)"></div>
 <div class="a" style="left:54px;top:47px;width:34px;height:1px;background:#999"></div>
 <div class="a" style="left:54px;top:49px;width:34px;height:6px;background:linear-gradient(90deg,#b86a3a,#5a3a2a 20%,#9a4a20 40%,#6a5444 60%,#a86848 80%,#8a4a30)"></div>
 <div class="a" style="left:0;top:57px;width:96px;height:3px;background:#e3e3e3"></div>
</div>
<div class="lbl" style="left: 769px; width: 104px; top: 452px; letter-spacing: 0.36px;">Снимка-2.</div>
<div class="lbl" style="left: 769px; width: 104px; top: 467px; letter-spacing: 0.18px;">png</div>

<!-- thumbnail store -->
<div class="a" style="left:1080px;top:435px;width:100px;height:64px;background:#fff;border:2px solid #111;box-shadow:0 2px 2px rgba(0,0,0,0.15),inset 0 0 0 0.5px #777;overflow:hidden">
 <div class="a" style="left:0;top:0;width:68px;height:7px;background:repeating-linear-gradient(#e8e8e8 0 1px,#cfcfcf 1px 2px,#f4f4f4 2px 3px)"></div>
 <div class="a" style="left:1px;top:7px;width:67px;height:15px;background:linear-gradient(#dfe9f3,#f2f6fa)"></div>
 <div class="a" style="left:4px;top:9px;width:8px;height:11px;border-radius:50% 40% 50% 50%;background:#1e1e1e"></div>
 <div class="a" style="left:13px;top:14px;width:21px;height:4px;background:#3a3a3a"></div>
 <div class="a" style="left:36px;top:13px;width:16px;height:5px;background:#74ad4e"></div>
 <div class="a" style="left:4px;top:25px;width:14px;height:15px;background:#2a2e44;clip-path:polygon(0 10%,30% 0,70% 0,100% 10%,100% 35%,85% 35%,85% 100%,15% 100%,15% 35%,0 35%)"></div>
 <div class="a" style="left:21px;top:25px;width:16px;height:15px;background:#eee;clip-path:polygon(0 10%,30% 0,70% 0,100% 10%,100% 35%,85% 35%,85% 100%,15% 100%,15% 35%,0 35%)"></div>
 <div class="a" style="left:21px;top:25px;width:3px;height:5px;background:#b33"></div><div class="a" style="left:34px;top:25px;width:3px;height:5px;background:#b33"></div>
 <div class="a" style="left:27px;top:29px;width:4px;height:3px;background:#c44"></div>
 <div class="a" style="left:39px;top:25px;width:15px;height:15px;background:#1f3b30;clip-path:polygon(0 10%,30% 0,70% 0,100% 10%,100% 35%,85% 35%,85% 100%,15% 100%,15% 35%,0 35%)"></div>
 <div class="a" style="left:4px;top:41px;width:50px;height:1px;background:repeating-linear-gradient(90deg,#7aa0d8 0 12px,transparent 12px 17px)"></div>
 <div class="a" style="left:56px;top:26px;width:10px;height:18px;background:repeating-linear-gradient(#fff 0 2px,#8cb0d8 2px 3px)"></div>
 <div class="a" style="left:4px;top:45px;width:15px;height:11px;background:#161616;clip-path:polygon(0 10%,30% 0,70% 0,100% 10%,100% 45%,85% 45%,85% 100%,15% 100%,15% 45%,0 45%)"></div>
 <div class="a" style="left:9px;top:48px;width:4px;height:4px;border-radius:50%;background:#b9902a"></div>
 <div class="a" style="left:21px;top:45px;width:16px;height:11px;background:#5c3b28;clip-path:polygon(0 10%,30% 0,70% 0,100% 10%,100% 45%,85% 45%,85% 100%,15% 100%,15% 45%,0 45%)"></div>
 <div class="a" style="left:39px;top:45px;width:15px;height:11px;background:#a6292a;clip-path:polygon(0 10%,30% 0,70% 0,100% 10%,100% 45%,85% 45%,85% 100%,15% 100%,15% 45%,0 45%)"></div>
 <div class="a" style="left:0;top:56px;width:68px;height:1px;background:#8ab0e0"></div>
 <div class="a" style="left:0;top:57px;width:68px;height:3px;background:#e0e0e0"></div>
 <div class="a" style="left:68px;top:1px;width:28px;height:58px;background:radial-gradient(ellipse 30px 22px at 110% 95%,transparent 60%,rgba(150,210,255,0.45) 68%,transparent 76%),radial-gradient(ellipse 26px 30px at 95% 10%,transparent 60%,rgba(150,210,255,0.4) 68%,transparent 76%),linear-gradient(160deg,#1d55a8,#2f7fd0 50%,#1a4d9e)"></div>
 <div class="a" style="left:68px;top:0;width:28px;height:1px;background:#ccc"></div>
 <div class="a" style="left:68px;top:59px;width:28px;height:1px;background:#ccc"></div>
</div>
<div class="lbl" style="left: 1081px; width: 104px; top: 504px; letter-spacing: 0.12px;">Снимка.png</div>

<!-- thumbnail 1 -->
<div class="a" style="left:836px;top:569px;width:100px;height:64px;background:#fff;border:2px solid #111;box-shadow:0 2px 2px rgba(0,0,0,0.15),inset 0 0 0 0.5px #777;overflow:hidden">
 <div class="a" style="left:0;top:0;width:96px;height:2px;background:#dedede"></div>
 <div class="a" style="left:5px;top:4px;width:7px;height:3px;background:#3a4a66"></div>
 <div class="a" style="left:5px;top:10px;width:7px;height:4px;background:#a9ab93"></div>
 <div class="a" style="left:6px;top:16px;width:5px;height:4px;background:#c8c8c8"></div>
 <div class="a" style="left:5px;top:23px;width:8px;height:6px;background:linear-gradient(90deg,#c44 50%,#3a70c0 50%)"></div>
 <div class="a" style="left:21px;top:8px;width:51px;height:33px;background:#ececea;border:1px solid #d0d0d0"></div>
 <div class="a" style="left:21px;top:8px;width:51px;height:2px;background:#7ea3d6"></div>
 <div class="a" style="left:23px;top:13px;width:10px;height:1px;background:#666"></div>
 <div class="a" style="left:23px;top:17px;width:8px;height:1px;background:#6a8ed0"></div>
 <div class="a" style="left:23px;top:21px;width:48px;height:2px;background:repeating-linear-gradient(90deg,#999 0 20px,transparent 20px 24px)"></div>
 <div class="a" style="left:24px;top:26px;width:45px;height:12px;background:#fafafa;border:1px solid #c4c4c4"></div>
 <div class="a" style="left:25px;top:28px;width:43px;height:2px;background:#8cb0e0"></div>
 <div class="a" style="left:26px;top:31px;width:35px;height:5px;background:repeating-linear-gradient(#aaa 0 1px,transparent 1px 2px)"></div>
 <div class="a" style="left:77px;top:20px;width:2px;height:1px;background:#888"></div>
 <div class="a" style="left:0;top:57px;width:96px;height:3px;background:#e3e3e3"></div>
 <div class="a" style="left:35px;top:58px;width:16px;height:1px;background:#6a8ed0"></div>
</div>
<div class="lbl" style="left: 837px; width: 104px; top: 639px; letter-spacing: 0.27px;">Снимка-1.</div>
<div class="lbl" style="left: 837px; width: 104px; top: 655px; letter-spacing: 0.18px;">png</div>

<!-- tooltip -->
<div class="a" style="left:932px;top:723px;width:175px;height:25px;background:#e6f1fb;border:1px solid #7ea4d4;border-radius:4px"></div>
<div class="t" style="left: 940px; top: 727px; letter-spacing: 0.11px;">ash — файлов браузър</div>
<!-- resize grip -->
<div class="a" style="left:1266px;top:737px;width:12px;height:12px;background:radial-gradient(circle,#9c9893 0.8px,transparent 1.1px) 0 0/3px 3px;clip-path:polygon(100% 0,100% 100%,0 100%)"></div>
<!-- window bottom -->
<div class="a" style="left:0;top:749px;width:1280px;height:1px;background:#f6f4f0"></div><div class="a" style="left:0;top:750px;width:1280px;height:1px;background:#475f82"></div><div class="a" style="left:0;top:751px;width:1280px;height:1px;background:#f2f3f6"></div>

</body></html>
